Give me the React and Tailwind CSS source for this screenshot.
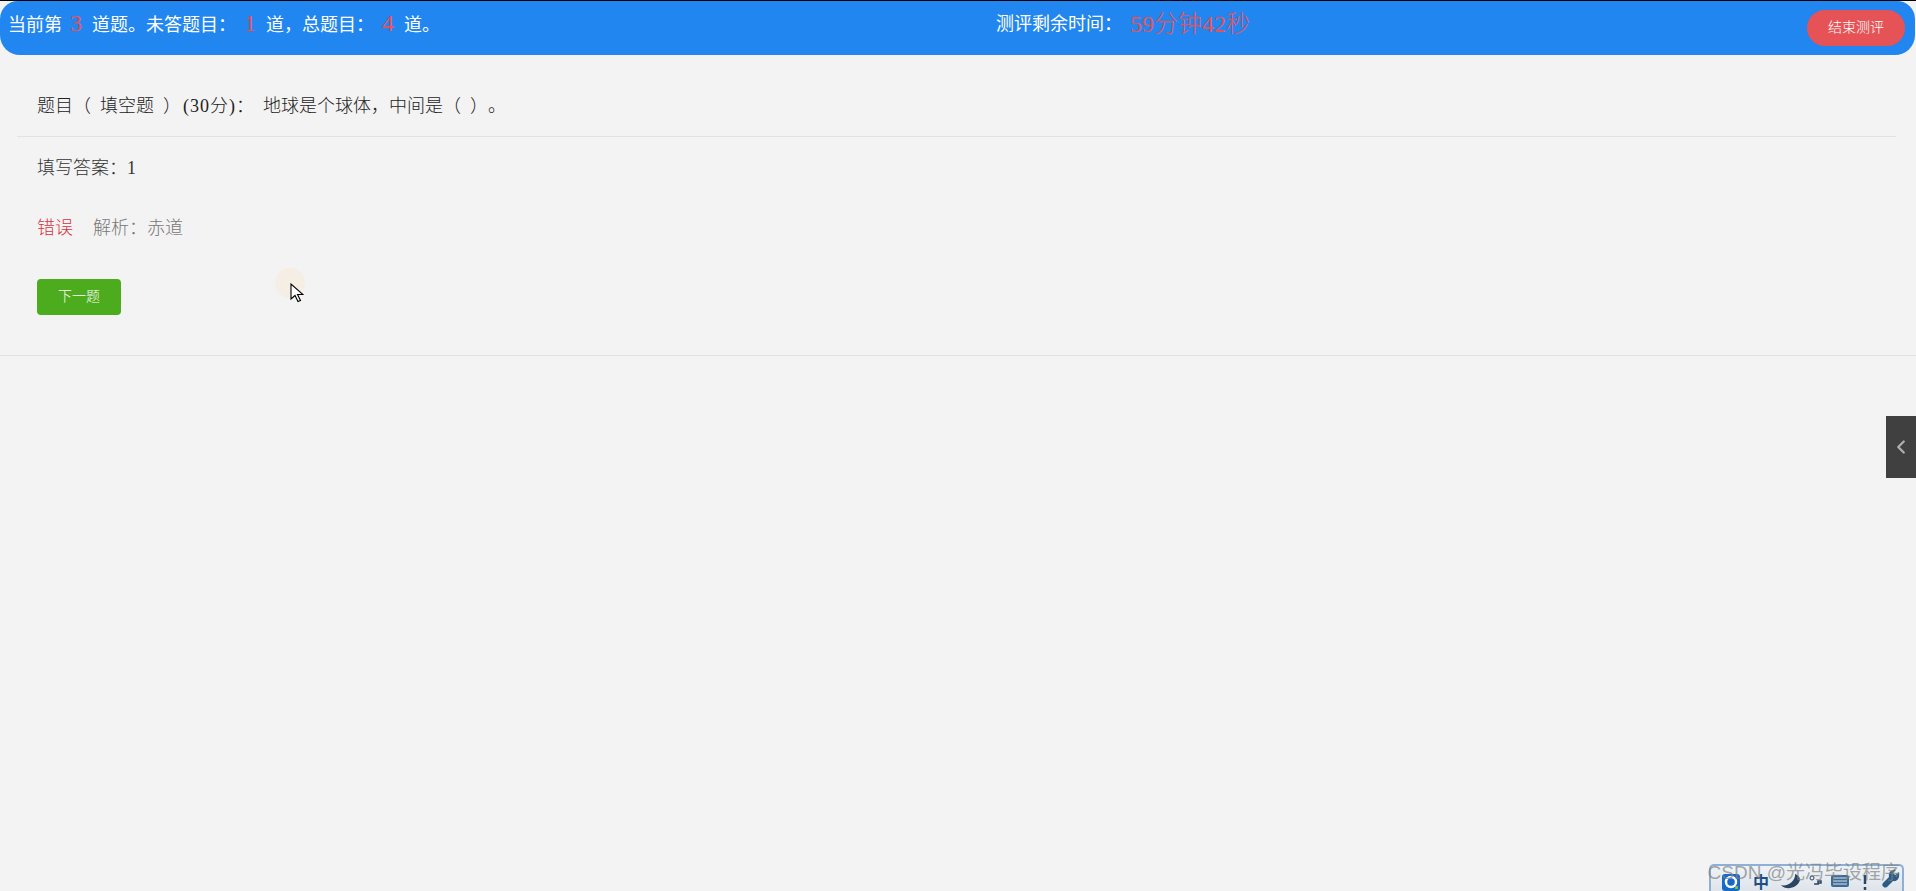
import React from "react";
import { ChevronLeft } from "lucide-react";

const font = "font-['Liberation_Serif','Noto_Sans_CJK_SC',serif]";

function Num({ children }) {
    return <span className="ml-2 mr-[10px] text-[24px] text-[#e5525a]">{children}</span>;
}

function TrayIcons() {
    return (
        <svg width="191" height="25" viewBox="0 0 191 25" className="block">
            <rect x="11" y="8" width="18" height="17" rx="3" fill="#1668c9" />
            <circle cx="20" cy="16" r="5" fill="none" stroke="#fff" strokeWidth="2.500" />
            <rect x="24" y="20" width="3" height="3" fill="#6fc53a" />
            <text x="42" y="22" fontSize="16" fontWeight="700" fill="#1d4f86" fontFamily="Noto Sans CJK SC">中</text>
            <path d="M84 8c1 7-8 13-14 11 5 6 17 3 19-5 0-3-2-5-5-6z" fill="#2c4660" />
            <circle cx="101" cy="12" r="2" fill="none" stroke="#2c4660" />
            <path d="M107 15h3v2h-3zM103 18h5" stroke="#2c4660" strokeWidth="1.500" fill="none" />
            <rect x="120" y="9" width="18" height="12" rx="2" fill="#3f6a94" />
            <path d="M122 12h14M122 15h14M122 18h14" stroke="#d7e3ee" />
            <path d="M154 9v9M154 21v3" stroke="#2c4660" strokeWidth="2.500" />
            <path d="M188 6l-4 3-2-2 3-3c-4-1-8 2-7 7l-6 6c-2 2 1 6 4 4l6-6c5 1 7-4 6-9z" fill="#2c5c86" />
        </svg>
    );
}

export default function App() {
    return (
        <div className={`relative h-[891px] overflow-hidden bg-[#f3f3f3] ${font} text-[18px] leading-[26px] [text-spacing-trim:space-all]`}>
            <div className="border-t border-black">
                <header className="mr-px flex h-[54px] items-center rounded-[20px] rounded-t-[18px] bg-[#2186f0] pl-2 pr-[10px] text-white">
                    <div className="-mt-[9px] w-[988px] shrink-0 whitespace-nowrap">
                        当前第<Num>3</Num>道题。未答题目：<Num>1</Num>道，总题目：<Num>4</Num>道。
                    </div>
                    <div className="-mt-[9px] flex items-center whitespace-nowrap">
                        <span>测评剩余时间：</span>
                        <span className="ml-[8px] text-[24px] font-light text-[#e5525a]">59分钟42秒</span>
                    </div>
                    <button className="ml-auto h-9 w-[98px] rounded-full bg-[#e55356] text-sm font-light text-white">结束测评</button>
                </header>
            </div>

            <section className="h-[301px] border-b border-[#e2e2e2] font-light">
                <div className="mx-[17px] mr-[20px] flex h-[82px] items-center whitespace-pre border-b border-[#e2e2e2] pl-5 pt-5 text-[#222] [word-spacing:4.5px]">
                    题目（ 填空题 ）<span className="ml-0.5 tracking-[1px]">(30分)</span>： 地球是个球体，中间是（ ）。
                </div>
                <p className="mt-[18px] pl-[37px] text-[#333]">填写答案：1</p>
                <p className="mt-[34px] pl-[37px] text-[#777]">
                    <span className="mr-5 text-[#d6333d]">错误</span>解析：赤道
                </p>
                <button className="ml-[37px] mt-[38px] h-9 w-[84px] rounded bg-[#4dac1d] text-sm text-white">下一题</button>
            </section>

            {/* mouse highlight */}
            <div className="absolute left-[275px] top-[268px] size-[30px] rounded-full bg-[#f5eee4]" />
            <svg width="14" height="20" viewBox="0 0 14 20" className="absolute left-[290px] top-[283px]">
                <path d="M1 1v15l4-3.500 3 6 2.500-1-3-6h5.500z" fill="#fff" stroke="#000" strokeWidth="1.100" />
            </svg>

            <div className="absolute right-0 top-[416px] flex h-[62px] w-[30px] items-center justify-center bg-[#404040]">
                <ChevronLeft size={22} strokeWidth={2.5} className="text-[#b0b0b0]" />
            </div>

            <div className="absolute bottom-0 right-3 h-[27px] w-[195px] overflow-hidden rounded-t-[5px] border-2 border-b-0 border-[#8fb0d4] bg-gradient-to-b from-[#eef3f8] to-[#dfe4ea]">
                <TrayIcons />
            </div>
            <div className="absolute bottom-[5px] right-[16px] whitespace-nowrap font-['Liberation_Sans','Noto_Sans_CJK_SC',sans-serif] text-[19px] leading-[26px] text-[#808080]/70">
                CSDN @光冯毕设程序
            </div>
        </div>
    );
}
